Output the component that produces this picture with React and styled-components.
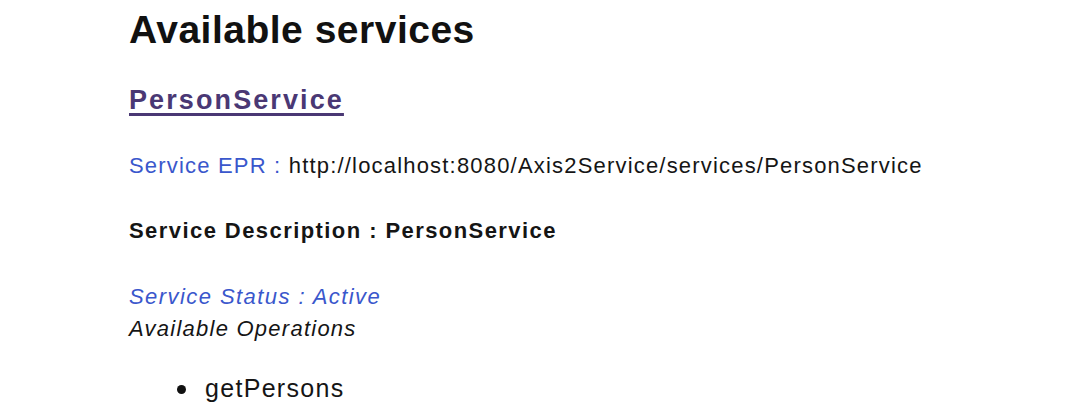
import React from "react";
import styled, { createGlobalStyle } from "styled-components";

const GlobalStyle = createGlobalStyle`
  body {
    margin: 0;
    background: #ffffff;
    font-family: "Liberation Sans", Arial, sans-serif;
    color: #111111;
  }
`;

const Page = styled.div`
  padding: 6px 0 0 129px;
  width: 1080px;
  height: 420px;
  box-sizing: border-box;
  overflow: hidden;
`;

const Title = styled.h1`
  margin: 0;
  font-size: 39px;
  line-height: 48px;
  font-weight: 700;
  letter-spacing: 0.5px;
  color: #111111;
`;

const ServiceLink = styled.a`
  display: inline-block;
  margin-top: 31px;
  font-size: 27px;
  line-height: 30px;
  font-weight: 700;
  letter-spacing: 2.1px;
  color: #4a3874;
  text-decoration: underline;
  text-decoration-thickness: 3px;
  text-underline-offset: 4px;
`;

const Line = styled.p`
  margin: ${(p) => p.$top || 0}px 0 0;
  font-size: 22px;
  line-height: 32px;
  letter-spacing: ${(p) => p.$spacing || 1.35}px;
  font-weight: ${(p) => (p.$bold ? 700 : 400)};
  font-style: ${(p) => (p.$italic ? "italic" : "normal")};
  color: ${(p) => p.$color || "#151515"};
`;

const Label = styled.span`
  color: #3a57cc;
`;

const OpList = styled.ul`
  list-style: none;
  margin: 27px 0 0;
  padding-left: 48px;
`;

const OpItem = styled.li`
  display: flex;
  align-items: center;
  gap: 19px;
  font-size: 25px;
  line-height: 32px;
  letter-spacing: 1.3px;
  color: #151515;

  &::before {
    content: "";
    width: 9px;
    height: 9px;
    border-radius: 50%;
    background: #111111;
    margin-top: 2px;
  }
`;

export default function App() {
  return (
    <>
      <GlobalStyle />
      <Page>
        <Title>Available services</Title>
        <ServiceLink href="#">PersonService</ServiceLink>
        <Line $top={35} $spacing={1.19}>
          <Label>Service EPR :</Label> http://localhost:8080/Axis2Service/services/PersonService
        </Line>
        <Line $top={33} $bold $spacing={1.43}>
          Service Description : PersonService
        </Line>
        <Line $top={34} $italic $color="#3a57cc" $spacing={1.43}>
          Service Status : Active
        </Line>
        <Line $italic $spacing={1.25}>Available Operations</Line>
        <OpList>
          <OpItem>getPersons</OpItem>
        </OpList>
      </Page>
    </>
  );
}
